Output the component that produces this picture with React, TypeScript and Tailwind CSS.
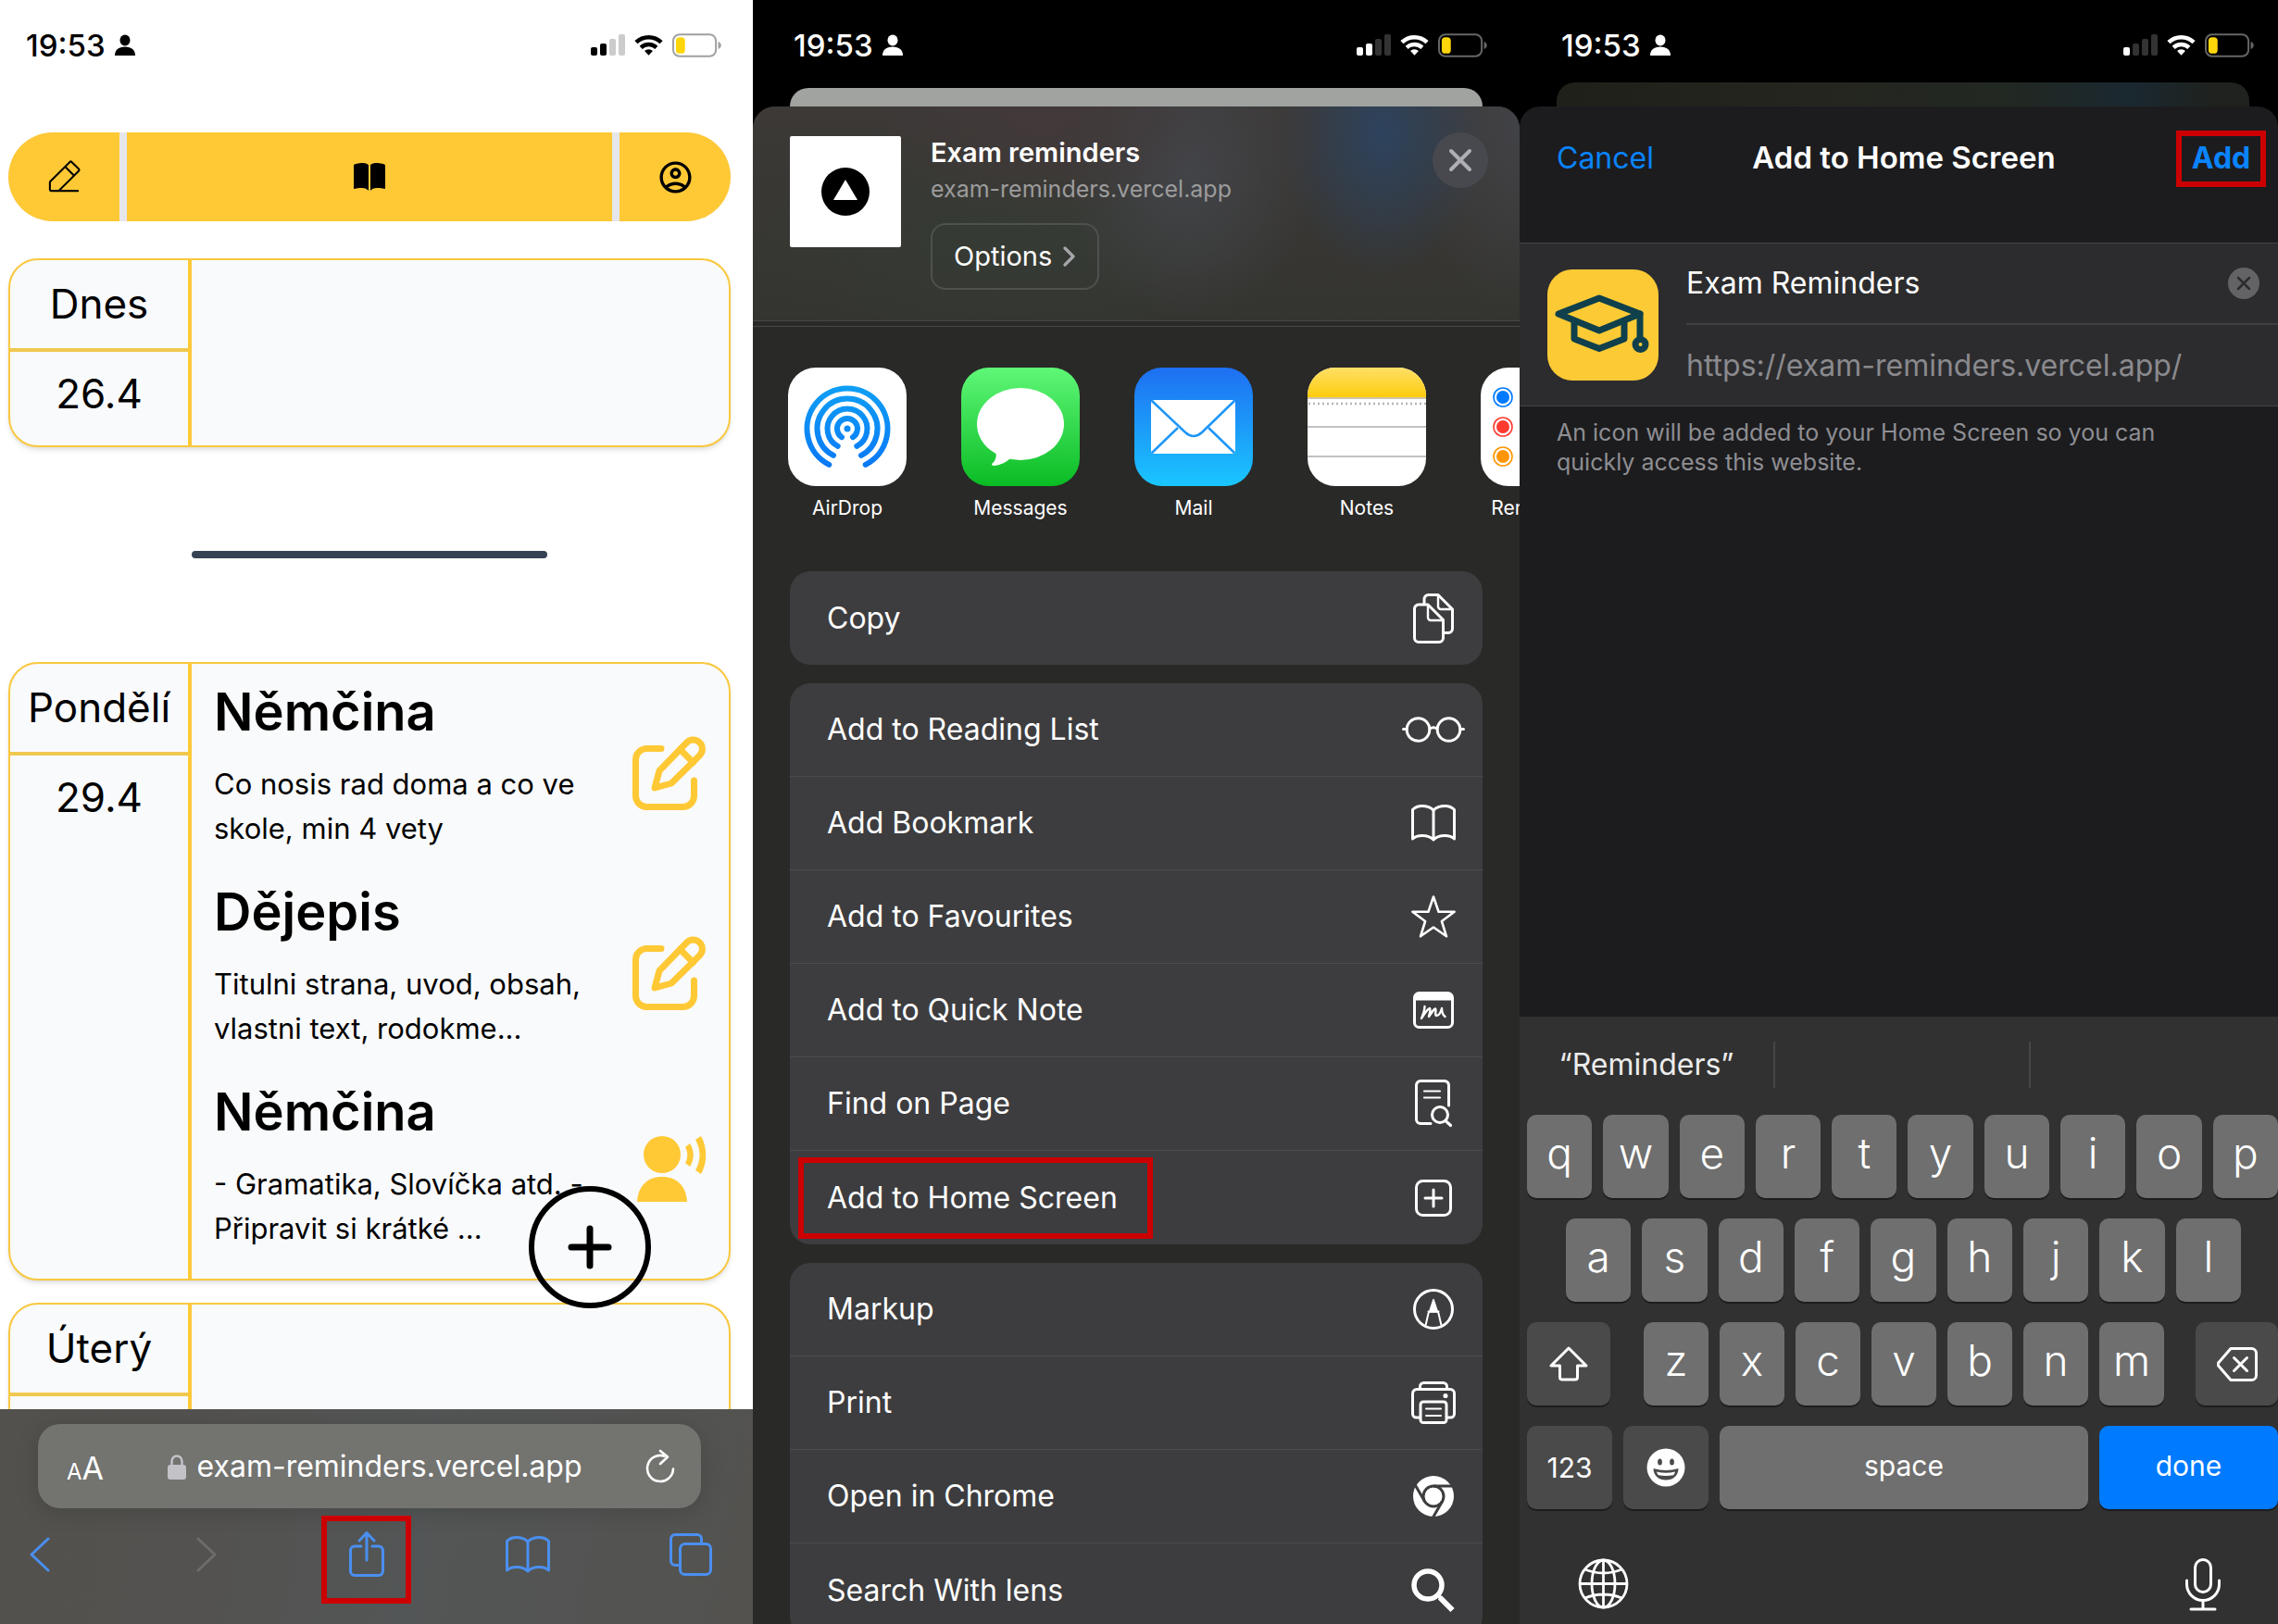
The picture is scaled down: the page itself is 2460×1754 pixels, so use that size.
import type { ReactNode } from "react";
import { MdOutlineAccountCircle } from "react-icons/md";
import { PiPencilSimpleLineLight } from "react-icons/pi";

/* ---------- Status bar ---------- */

function StatusBar({ bars, dark, className }: { bars: number; dark?: boolean; className: string }) {
  const ink = dark ? "#ffffff" : "#000000";
  const faint = dark ? "#333333" : "#cccccc";
  const frame = dark ? "#666666" : "#a0a0a0";
  const shapes = [
    { x: 0, y: 14, h: 9 },
    { x: 10, y: 10, h: 13 },
    { x: 20, y: 5, h: 18 },
    { x: 30, y: 0, h: 23 },
  ];
  return (
    <header className={"flex shrink-0 items-center justify-between " + className}>
      <div className="flex items-center gap-2.5">
        <span className="text-[33px] leading-10 font-medium">19:53</span>
        <svg width="22" height="24" viewBox="0 0 22 24" fill={ink} aria-label="Focus">
          <ellipse cx="11" cy="6.5" rx="5.5" ry="6" />
          <path d="M0 23c0-6 4-9.5 11-9.5S22 17 22 23z" />
        </svg>
      </div>
      <div className="flex items-center gap-2.5">
        <svg width="37" height="24" viewBox="0 0 37 24" aria-label="Signal">
          {shapes.map((s, i) => (
            <rect key={s.x} x={s.x} y={s.y} width="7" height={s.h} rx="2" fill={i < bars ? ink : faint} />
          ))}
        </svg>
        <svg width="31" height="24" viewBox="0 0 32 24" fill="none" stroke={ink} strokeWidth="4.6" aria-label="Wi-Fi">
          <path d="M2 8.6a20 20 0 0 1 28 0" />
          <path d="M7.4 14.4a12.4 12.4 0 0 1 17.2 0" />
          <path d="M16 23l-4.6-4.7a6.6 6.6 0 0 1 9.2 0z" fill={ink} stroke="none" />
        </svg>
        <svg width="53" height="26" viewBox="0 0 54 26" aria-label="Battery">
          <rect x="1" y="1" width="47" height="24" rx="7" fill="none" stroke={frame} strokeWidth="2" />
          <rect x="4" y="4" width="10" height="18" rx="4" fill="#ffd60a" />
          <path d="M50.5 9c2.4 1 3.2 2.2 3.2 4s-.8 3-3.2 4z" fill={frame} />
        </svg>
      </div>
    </header>
  );
}

/* ---------- Web page in Safari ---------- */

function EditIcon() {
  return (
    <svg width="80" height="80" viewBox="0 0 80 80" fill="none" stroke="#ffc936" strokeWidth="7" strokeLinecap="round" strokeLinejoin="round">
      <path d="M31 13.5H15.500A12 12 0 0 0 3.500 25.500V64.500A12 12 0 0 0 15.500 76.500H54.500A12 12 0 0 0 66.500 64.500V48" />
      <path d="M24 56l5-18.500L58.500 7a9.800 9.800 0 0 1 14 14L42 51z" />
      <path d="M51.500 14.500l14 14" />
    </svg>
  );
}

function SpeakingIcon() {
  return (
    <svg width="75" height="72" viewBox="0 0 75 72" fill="#ffc936">
      <circle cx="27" cy="20" r="20" />
      <path d="M0 71c1-17 11-27 27-27s26 10 27 27z" />
      <path d="M52 12l5-4c5 8 5 17 0 25l-5-4c3-5 3-12 0-17z" />
      <path d="M63 4l6-4c7 12 7 29 0 41l-6-4c6-10 6-23 0-33z" />
    </svg>
  );
}

function DayCard({ day, date, children, className }: { day: string; date?: string; children?: ReactNode; className?: string }) {
  return (
    <section
      className={
        "ml-[9px] mr-6 flex shrink-0 overflow-hidden rounded-[32px] border-2 border-[#f9c840] bg-[#f9fafb] shadow-md " + className
      }
    >
      <div className="w-[196px] shrink-0 border-r-4 border-[#ffc936] text-center text-[44px]">
        <h2 className="flex h-[99px] items-center justify-center border-b-4 border-[#f0c850] pb-0.5">{day}</h2>
        <p className="flex h-[90px] items-center justify-center">{date}</p>
      </div>
      <div className="flex-1">{children}</div>
    </section>
  );
}

const exams = [
  { subject: "Němčina", lines: ["Co nosis rad doma a co ve", "skole, min 4 vety"], icon: <EditIcon /> },
  { subject: "Dějepis", lines: ["Titulni strana, uvod, obsah,", "vlastni text, rodokme..."], icon: <EditIcon /> },
  { subject: "Němčina", lines: ["- Gramatika, Slovíčka atd. -", "Připravit si krátké ..."], icon: <SpeakingIcon /> },
];

function BookOutline() {
  return (
    <svg width="48" height="40" viewBox="0 0 48 40" fill="none" stroke="currentColor" strokeWidth="3" strokeLinejoin="round">
      <path d="M24 6C20 2 15 1.500 11.500 1.500S4 3 1.500 5.500V37C4 34.500 8 33.500 12 33.500s8.500 1 12 4.500c3.500-3.500 8-4.500 12-4.500s8 1 10.500 3.500V5.500C44 3 40 1.500 36.500 1.500S28 2 24 6z" />
      <path d="M24 6v32" />
    </svg>
  );
}

function SafariPanel() {
  return (
    <section className="relative flex min-w-0 flex-col overflow-hidden bg-white text-black">
      <StatusBar bars={2} className="h-[98px] pl-7 pr-[34px]" />
      <main className="flex min-h-0 flex-1 flex-col overflow-hidden">
        <nav className="ml-[9px] mr-6 mt-[45px] flex h-24 shrink-0 gap-2 overflow-hidden rounded-full bg-gray-200">
          <button aria-label="Edit" className="flex w-[120px] items-center justify-center bg-[#ffc936]">
            <PiPencilSimpleLineLight size={44} />
          </button>
          <button aria-label="Exams" className="flex flex-1 items-center justify-center bg-[#ffc936]">
            <svg width="34" height="30" viewBox="0 0 34 30">
              <path d="M0 2.500C0 1 6 0 9.500 0S16 1.500 16 2.500V30c-1.500-2-4-3-7-3s-7 .5-9 1zM34 2.500C34 1 28 0 24.500 0S18 1.500 18 2.500V30c1.500-2 4-3 7-3s7 .5 9 1z" />
            </svg>
          </button>
          <button aria-label="Account" className="flex w-[120px] items-center justify-center bg-[#ffc936]">
            <MdOutlineAccountCircle size={41} />
          </button>
        </nav>
        <DayCard day="Dnes" date="26.4" className="mt-10 h-[204px]" />
        <hr className="ml-[207px] mt-28 h-2 w-96 shrink-0 rounded-full border-0 bg-gray-700" />
        <DayCard day="Pondělí" date="29.4" className="mt-28 h-[668px]">
          <div className="flex flex-col gap-[30px] pb-8 pl-6 pr-6 pt-4">
            {exams.map((e, i) => (
              <article key={i} className="flex justify-between">
                <div>
                  <h3 className="text-[56px] leading-[72px] font-semibold">{e.subject}</h3>
                  <p className="mt-[18px] text-[31px] leading-[48px] whitespace-nowrap">
                    {e.lines[0]}
                    <br />
                    {e.lines[1]}
                  </p>
                </div>
                <div className="pt-[62px]">{e.icon}</div>
              </article>
            ))}
          </div>
        </DayCard>
        <DayCard day="Úterý" className="mt-6 h-[204px]" />
      </main>
      <button aria-label="Add exam" className="absolute bottom-[341px] right-[110px]">
        <svg width="132" height="132" viewBox="0 0 132 132" fill="none" stroke="#000">
          <circle cx="66" cy="66" r="63" strokeWidth="6" />
          <path d="M66 46v40M46 66h40" strokeWidth="7" strokeLinecap="round" />
        </svg>
      </button>
      <footer className="h-[232px] shrink-0 bg-[linear-gradient(100deg,#53514d_0%,#535250_30%,#535656_55%,#53524f_100%)] pt-4 text-[#4a8ff0]">
        <div className="ml-[41px] mr-14 flex h-[91px] items-center justify-between rounded-[24px] bg-[#737370] pl-[31px] pr-7 text-white shadow-[0_4px_24px_rgba(0,0,0,0.15)]">
          <button aria-label="Page settings" className="flex items-baseline pt-1 leading-none">
            <span className="text-[24px]">A</span>
            <span className="text-[34px]">A</span>
          </button>
          <label className="flex items-center gap-3">
            <svg width="20" height="28" viewBox="0 0 20 28" fill="#c3c2c8" aria-label="Secure">
              <rect y="12" width="20" height="16" rx="3" />
              <path d="M4.500 13V8a5.500 5.500 0 0 1 11 0v5" fill="none" stroke="#c3c2c8" strokeWidth="2.500" />
            </svg>
            <input
              aria-label="Address"
              defaultValue="exam-reminders.vercel.app"
              className="field-sizing-content bg-transparent text-[32px] leading-10"
            />
          </label>
          <button aria-label="Reload">
            <svg width="32" height="38" viewBox="0 0 32 38" fill="none" stroke="currentColor" strokeWidth="2.600" strokeLinecap="round" strokeLinejoin="round">
              <path d="M20.500 7.700A14 14 0 1 0 30 21.500" />
              <path d="M16 2l8 6.500-8 7.500" />
            </svg>
          </button>
        </div>
        <div className="flex items-center justify-between pl-8 pr-11 pt-2">
          <button aria-label="Back" className="pb-3">
            <svg width="22" height="38" viewBox="0 0 22 38" fill="none" stroke="currentColor" strokeWidth="3" strokeLinecap="round" strokeLinejoin="round">
              <path d="M20 2L2 19l18 17" />
            </svg>
          </button>
          <button aria-label="Forward" className="ml-14 pb-3 text-[#6e6c69]">
            <svg width="22" height="38" viewBox="0 0 22 38" fill="none" stroke="currentColor" strokeWidth="3" strokeLinecap="round" strokeLinejoin="round">
              <path d="M2 2l18 17L2 36" />
            </svg>
          </button>
          <button aria-label="Share" className="ml-3 flex h-[95px] w-[97px] justify-center border-[6px] border-[#cc0000] pt-[11px]">
            <svg width="38" height="49" viewBox="0 0 38 49" fill="none" stroke="currentColor" strokeWidth="3" strokeLinecap="round" strokeLinejoin="round">
              <path d="M13 16H6a4.500 4.500 0 0 0-4.500 4.500V43A4.500 4.500 0 0 0 6 47.500h26a4.500 4.500 0 0 0 4.500-4.500V20.500A4.500 4.500 0 0 0 32 16h-7" />
              <path d="M19 31V2M11 10l8-8.500 8 8.500" />
            </svg>
          </button>
          <button aria-label="Bookmarks" className="pb-3">
            <BookOutline />
          </button>
          <button aria-label="Tabs" className="ml-7 pb-3">
            <svg width="46" height="46" viewBox="0 0 46 46" fill="none" stroke="currentColor" strokeWidth="3">
              <path d="M11 34.500H6A4.500 4.500 0 0 1 1.500 30V6A4.500 4.500 0 0 1 6 1.500h24A4.500 4.500 0 0 1 34.500 6v5" />
              <rect x="11.500" y="11.500" width="33" height="33" rx="5" />
            </svg>
          </button>
        </div>
      </footer>
    </section>
  );
}

/* ---------- Share sheet ---------- */

function AirDropIcon() {
  return (
    <svg width="128" height="128" viewBox="0 0 128 128" fill="none">
      <defs>
        <linearGradient id="drop" x1="0" y1="20" x2="0" y2="108" gradientUnits="userSpaceOnUse">
          <stop stopColor="#0f9ff5" />
          <stop offset="1" stopColor="#0a78f5" />
        </linearGradient>
      </defs>
      <rect width="128" height="128" fill="#fff" />
      <g stroke="url(#drop)" strokeWidth="6" strokeLinecap="round">
        <path d="M44.300 104.800a43.500 43.500 0 1 1 39.400 0" />
        <path d="M49 94.900a32.500 32.500 0 1 1 30 0" />
        <path d="M53.700 84.900a21.500 21.500 0 1 1 20.600 0" />
        <path d="M58 75.200a11 11 0 1 1 12 0" />
      </g>
      <circle cx="64" cy="66" r="3.500" fill="#0c8cf5" />
    </svg>
  );
}

function MessagesIcon() {
  return (
    <svg width="128" height="128" viewBox="0 0 128 128">
      <defs>
        <linearGradient id="msg" x1="0" y1="0" x2="0" y2="1">
          <stop stopColor="#5ff777" />
          <stop offset="1" stopColor="#0abc24" />
        </linearGradient>
      </defs>
      <rect width="128" height="128" fill="url(#msg)" />
      <ellipse cx="64" cy="61" rx="47" ry="39" fill="#fff" />
      <path d="M36 86c3 8 2 14-3 18 0 2 2 2 3 2 7-1 13-4 17-8z" fill="#fff" />
    </svg>
  );
}

function MailIcon() {
  return (
    <svg width="128" height="128" viewBox="0 0 128 128">
      <defs>
        <linearGradient id="mail" x1="0" y1="0" x2="0" y2="1">
          <stop stopColor="#1e6ff2" />
          <stop offset="1" stopColor="#1ac6ff" />
        </linearGradient>
      </defs>
      <rect width="128" height="128" fill="url(#mail)" />
      <rect x="18" y="35" width="91" height="58" rx="4" fill="#fff" />
      <g fill="none" stroke="#1e96f8" strokeWidth="2.500">
        <path d="M19 36l36 34q9 8 18 0l35-34" />
        <path d="M19 92l28-27M108 92L80 65" />
      </g>
    </svg>
  );
}

function NotesIcon() {
  return (
    <svg width="128" height="128" viewBox="0 0 128 128">
      <defs>
        <linearGradient id="note" x1="0" y1="0" x2="0" y2="1">
          <stop stopColor="#ffdf66" />
          <stop offset="1" stopColor="#fdcd0e" />
        </linearGradient>
      </defs>
      <rect width="128" height="128" fill="#fff" />
      <rect width="128" height="32" fill="url(#note)" />
      <path d="M0 33h128" stroke="#cfc6a8" strokeWidth="2" />
      <path d="M1 39h128" stroke="#b5b5b8" strokeWidth="2.500" strokeDasharray="2 3" />
      <path d="M0 64h128M0 96h128" stroke="#c2c2c4" strokeWidth="2" />
    </svg>
  );
}

function RemindersIcon() {
  const dots = [
    { y: 32, c: "#007aff" },
    { y: 64, c: "#ff3b30" },
    { y: 96, c: "#ff9500" },
  ];
  return (
    <svg width="128" height="128" viewBox="0 0 128 128">
      <rect width="128" height="128" fill="#fff" />
      {dots.map((d) => (
        <g key={d.c}>
          <circle cx="24" cy={d.y} r="10" fill="#fff" stroke={d.c} strokeWidth="1.600" />
          <circle cx="24" cy={d.y} r="7" fill={d.c} />
          <path d={"M48 " + (d.y + 16) + "h80"} stroke="#d0d0d4" strokeWidth="1.500" />
        </g>
      ))}
    </svg>
  );
}

const apps = [
  { name: "AirDrop", icon: <AirDropIcon /> },
  { name: "Messages", icon: <MessagesIcon /> },
  { name: "Mail", icon: <MailIcon /> },
  { name: "Notes", icon: <NotesIcon /> },
  { name: "Reminders", icon: <RemindersIcon /> },
];

function Glyph({ w, h, children }: { w: number; h: number; children: ReactNode }) {
  return (
    <svg width={w} height={h} viewBox={"0 0 " + w + " " + h} fill="none" stroke="#fff" strokeWidth="3" strokeLinecap="round" strokeLinejoin="round">
      {children}
    </svg>
  );
}

type Action = { label: string; icon: ReactNode; marked?: boolean };

const groups: Action[][] = [
  [
    {
      label: "Copy",
      icon: (
        <Glyph w={44} h={54}>
          <path d="M12 11V6a4.500 4.500 0 0 1 4.500-4.500H27L42.500 17v21a4.500 4.500 0 0 1-4.500 4.500h-5" />
          <path d="M27 2v12a3 3 0 0 0 3 3h12" strokeWidth="2.400" />
          <path d="M16 12H6a4.500 4.500 0 0 0-4.500 4.500V48A4.500 4.500 0 0 0 6 52.500h22a4.500 4.500 0 0 0 4.500-4.500V28.500z" />
          <path d="M16 12.500V26a3 3 0 0 0 3 3h13" strokeWidth="2.400" />
        </Glyph>
      ),
    },
  ],
  [
    {
      label: "Add to Reading List",
      icon: (
        <Glyph w={68} h={28}>
          <circle cx="17.500" cy="14" r="12.300" />
          <circle cx="50.500" cy="14" r="12.300" />
          <path d="M30 13q4-2.500 8 0M1.500 13.500H5M63 13.500h3.500" />
        </Glyph>
      ),
    },
    { label: "Add Bookmark", icon: <BookOutline /> },
    {
      label: "Add to Favourites",
      icon: (
        <Glyph w={48} h={46}>
          <path d="M24 1.500l5.600 16.300h17L32.900 28l5.100 16.300L24 34.500 10 44.300 15.100 28 1.400 17.800h17z" strokeWidth="2.600" />
        </Glyph>
      ),
    },
    {
      label: "Add to Quick Note",
      icon: (
        <Glyph w={44} h={40}>
          <rect x="1.500" y="1.500" width="41" height="37" rx="5" />
          <path d="M2 6a4 4 0 0 1 4-4h32a4 4 0 0 1 4 4v3H2z" fill="#fff" stroke="none" />
          <path d="M2 8h40" />
          <path d="M12.500 16c0 5-2 9-3.500 13 3-5 6-10 9-11 1.500 1-.5 6-1 9 3-4 5-8 7-8.500 1.500.5-1 7.500 1 7.500 3 0 5-4 6-8 0 4 1 7 3.500 9" strokeWidth="2.400" />
        </Glyph>
      ),
    },
    {
      label: "Find on Page",
      icon: (
        <Glyph w={40} h={52}>
          <path d="M17 47.500H6A4.500 4.500 0 0 1 1.500 43V6A4.500 4.500 0 0 1 6 1.500h26A4.500 4.500 0 0 1 36.500 6v22" />
          <path d="M10 12.500h17M10 19.500h17" strokeWidth="2.200" />
          <circle cx="27" cy="38" r="8.500" />
          <path d="M33 44.500l5.500 5" strokeWidth="3.200" />
        </Glyph>
      ),
    },
    {
      label: "Add to Home Screen",
      marked: true,
      icon: (
        <Glyph w={40} h={40}>
          <rect x="1.500" y="1.500" width="37" height="37" rx="7" />
          <path d="M20 11v18M11 20h18" />
        </Glyph>
      ),
    },
  ],
  [
    {
      label: "Markup",
      icon: (
        <Glyph w={44} h={44}>
          <circle cx="22" cy="22" r="20.500" />
          <path d="M22 11.500l4.500 13.500h-9z" fill="#fff" strokeWidth="1.500" />
          <path d="M17 24.500l-3.500 15M27 24.500l3.500 15M16.500 24.500h11" strokeWidth="2" />
        </Glyph>
      ),
    },
    {
      label: "Print",
      icon: (
        <Glyph w={48} h={46}>
          <path d="M9.500 8.500V5.500a4 4 0 0 1 4-4h21a4 4 0 0 1 4 4v3" />
          <path d="M9 39H5.500a4 4 0 0 1-4-4V13a4.500 4.500 0 0 1 4.500-4.500h36a4.500 4.500 0 0 1 4.500 4.500v22a4 4 0 0 1-4 4H39" />
          <rect x="10" y="22" width="28" height="22.500" rx="3" />
          <path d="M16 29.500h16M16 37h16" strokeWidth="2" />
          <circle cx="37" cy="15.500" r="1.800" fill="#fff" strokeWidth="1.500" />
        </Glyph>
      ),
    },
    {
      label: "Open in Chrome",
      icon: (
        <svg width="44" height="44" viewBox="0 0 44 44">
          <circle cx="22" cy="22" r="22" fill="#fff" />
          <g fill="none" stroke="#3d3d3f" strokeWidth="3">
            <circle cx="22" cy="22" r="11" />
            <path d="M22 11h22" />
            <path d="M22 11h22" transform="rotate(120 22 22)" />
            <path d="M22 11h22" transform="rotate(240 22 22)" />
          </g>
        </svg>
      ),
    },
    {
      label: "Search With lens",
      icon: (
        <svg width="48" height="48" viewBox="0 0 48 48" fill="none" stroke="#fff" strokeWidth="5.500">
          <circle cx="18" cy="18" r="15" />
          <path d="M29 29l4 4" strokeWidth="4" />
          <path d="M31 31.500l13.500 13.500" strokeWidth="6" />
        </svg>
      ),
    },
  ],
];

function SharePanel() {
  return (
    <section className="flex min-w-0 flex-col overflow-hidden bg-black text-white">
      <StatusBar bars={2} dark className="h-[95px] pl-11 pr-[35px] pt-0.5" />
      <div className="mx-10 h-5 shrink-0 rounded-t-[20px] bg-[#a0a39f]" />
      <div className="flex min-h-0 flex-1 flex-col overflow-hidden rounded-t-[24px] bg-[#292927]">
        <header className="flex h-[231px] shrink-0 items-start bg-[radial-gradient(ellipse_110px_150px_at_680px_30px,#2d435e_0%,transparent_100%),radial-gradient(ellipse_180px_120px_at_310px_10px,#43393a_0%,transparent_100%),radial-gradient(ellipse_140px_160px_at_470px_70px,#434449_0%,transparent_100%),radial-gradient(ellipse_300px_140px_at_280px_140px,#353b34_0%,transparent_100%),radial-gradient(ellipse_120px_200px_at_828px_20px,#414246_0%,transparent_100%),linear-gradient(#3c3937,#343430)] pl-10 pr-[34px] pt-8">
          <svg width="120" height="120" viewBox="0 0 120 120" className="rounded-xs" aria-label="Page thumbnail">
            <rect width="120" height="120" fill="#fff" />
            <circle cx="60" cy="60" r="26" />
            <path d="M60 47l13 22H47z" fill="#fff" />
          </svg>
          <div className="ml-8 flex flex-1 flex-col items-start">
            <h2 className="text-[29px] leading-9 font-semibold">Exam reminders</h2>
            <p className="mt-1 text-[25px] leading-[34px] text-[#9c9c9c]">exam-reminders.vercel.app</p>
            <button className="mt-5 flex h-[72px] items-center gap-3 rounded-2xl border-2 border-[#4e514e] px-[23px] text-[29px]">
              Options
              <svg width="14" height="22" viewBox="0 0 14 22" fill="none" stroke="#a5a5aa" strokeWidth="3.200" strokeLinecap="round" strokeLinejoin="round">
                <path d="M2 2l9 9-9 9" />
              </svg>
            </button>
          </div>
          <button aria-label="Close" className="-mt-1 flex h-[60px] w-[60px] items-center justify-center rounded-full bg-[#48494e]">
            <svg width="26" height="26" viewBox="0 0 26 26" stroke="#aeaeb4" strokeWidth="4" strokeLinecap="round">
              <path d="M3 3l20 20M23 3L3 23" />
            </svg>
          </button>
        </header>
        <div className="h-[7px] shrink-0 border-y border-[#484846]" />
        <ul className="flex shrink-0 gap-[59px] overflow-hidden pl-[38px] pt-11">
          {apps.map((a) => (
            <li key={a.name} className="shrink-0">
              <button className="flex w-32 flex-col items-center">
                <span className="overflow-hidden rounded-[30px]">{a.icon}</span>
                <span className="mt-2.5 text-[21px] leading-7">{a.name}</span>
              </button>
            </li>
          ))}
        </ul>
        <div className="mx-10 mt-[54px] flex flex-col gap-5">
          {groups.map((g, i) => (
            <ul key={i} className="overflow-hidden rounded-[22px] bg-[#3d3d3f]">
              {g.map((a) => (
                <li key={a.label} className="h-[101px] border-b border-[#4b4b4d] last:border-b-0">
                  <button className="relative flex h-full w-full items-center justify-between pl-10 text-[32px]">
                    {a.label}
                    <span className="flex w-[106px] justify-center">{a.icon}</span>
                    {a.marked && (
                      <span className="absolute left-[9px] top-[7px] h-[88px] w-[383px] border-[6px] border-[#cc0000]" />
                    )}
                  </button>
                </li>
              ))}
            </ul>
          ))}
        </div>
      </div>
    </section>
  );
}

/* ---------- Add to Home Screen ---------- */

function LetterKey({ k }: { k: string }) {
  return (
    <button className="flex h-[90px] min-w-0 flex-1 items-center justify-center rounded-[10px] bg-[#6f6f6f] pb-2 text-[46px] font-[350] shadow-[0_2px_0_#1d1d1d]">
      {k}
    </button>
  );
}

function Keyboard() {
  return (
    <div className="shrink-0 bg-[#313131]">
      <div className="mb-0.5 grid h-[104px] grid-cols-[276px_276px_1fr] items-center">
        <button className="h-[50px] border-r-2 border-[#464646] text-[32px] text-[#ececec]">“Reminders”</button>
        <span className="h-[50px] border-r-2 border-[#464646]" />
      </div>
      <div className="flex flex-col gap-[22px] pl-2">
        <div className="flex gap-3">
          {"qwertyuiop".split("").map((k) => (
            <LetterKey key={k} k={k} />
          ))}
        </div>
        <div className="flex gap-3 pl-[42px] pr-10">
          {"asdfghjkl".split("").map((k) => (
            <LetterKey key={k} k={k} />
          ))}
        </div>
        <div className="flex">
          <button aria-label="Shift" className="flex w-[90px] items-center justify-center rounded-[10px] bg-[#4a4a4a] shadow-[0_2px_0_#1d1d1d]">
            <svg width="42" height="38" viewBox="0 0 42 38" fill="none" stroke="#fff" strokeWidth="3" strokeLinejoin="round">
              <path d="M21 2L2 21h9.500v12.500a2.500 2.500 0 0 0 2.500 2.500h14a2.500 2.500 0 0 0 2.500-2.500V21H40z" />
            </svg>
          </button>
          <div className="ml-9 mr-[34px] flex flex-1 gap-3">
            {"zxcvbnm".split("").map((k) => (
              <LetterKey key={k} k={k} />
            ))}
          </div>
          <button aria-label="Delete" className="flex w-[89px] items-center justify-center rounded-[10px] bg-[#4a4a4a] shadow-[0_2px_0_#1d1d1d]">
            <svg width="44" height="37" viewBox="0 0 44 37" fill="none" stroke="#fff" strokeWidth="3" strokeLinecap="round" strokeLinejoin="round">
              <path d="M15 1.500h22.500a5 5 0 0 1 5 5v24a5 5 0 0 1-5 5H15L2 20.500a3 3 0 0 1 0-4z" />
              <path d="M18.500 11.500l14 14M32.500 11.500l-14 14" />
            </svg>
          </button>
        </div>
        <div className="flex h-[90px] gap-3 text-[30px]">
          <button className="w-[92px] rounded-[10px] bg-[#4a4a4a] shadow-[0_2px_0_#1d1d1d]">123</button>
          <button aria-label="Emoji" className="flex w-[92px] items-center justify-center rounded-[10px] bg-[#4a4a4a] shadow-[0_2px_0_#1d1d1d]">
            <svg width="42" height="42" viewBox="0 0 42 42" fill="#4a4a4a">
              <circle cx="21" cy="21" r="20.500" fill="#fff" />
              <ellipse cx="14.500" cy="15" rx="2.400" ry="3.600" />
              <ellipse cx="27.500" cy="15" rx="2.400" ry="3.600" />
              <path d="M7.500 22q13.500 4 27 0c0 8-6 12.500-13.500 12.500S7.500 30 7.500 22z" />
              <path d="M11 25.500q10 2.500 20 0-.6 2.500-2 3.800-8 1.500-16 0-1.400-1.300-2-3.800z" fill="#fff" />
            </svg>
          </button>
          <button className="flex-1 rounded-[10px] bg-[#6f6f6f] pb-1 shadow-[0_2px_0_#1d1d1d]">space</button>
          <button className="w-[193px] rounded-[10px] bg-[#007aff] pb-1 shadow-[0_2px_0_#1d1d1d]">done</button>
        </div>
      </div>
      <div className="flex items-start justify-between pb-[14px] pl-[63px] pr-[62px] pt-[53px]">
        <button aria-label="Next keyboard">
          <svg width="55" height="55" viewBox="0 0 55 55" fill="none" stroke="#fff" strokeWidth="2.800">
            <circle cx="27.500" cy="27.500" r="25.500" />
            <ellipse cx="27.500" cy="27.500" rx="12.500" ry="25.500" />
            <path d="M27.500 2v51M2 27.500h51M7.500 12q20 8 40 0M7.500 43q20-8 40 0" />
          </svg>
        </button>
        <button aria-label="Dictate">
          <svg width="38" height="57" viewBox="0 0 38 57" fill="none" stroke="#fff" strokeWidth="3" strokeLinecap="round">
            <rect x="10.500" y="1.500" width="17" height="35" rx="8.500" />
            <path d="M1.500 24v4a17.500 17.500 0 0 0 35 0v-4M19 45.500v9M6 55h26" />
          </svg>
        </button>
      </div>
    </div>
  );
}

function AddToHomePanel() {
  return (
    <section className="flex min-w-0 flex-col overflow-hidden bg-black text-white">
      <StatusBar bars={1} dark className="h-[89px] pl-[45px] pr-[26px] pt-2" />
      <div className="ml-10 mr-[31px] h-[26px] shrink-0 rounded-t-[20px] bg-[linear-gradient(90deg,#20201a_0%,#25251f_35%,#222822_65%,#1a2830_83%,#1f221e_95%)]" />
      <div className="flex min-h-0 flex-1 flex-col overflow-hidden rounded-t-[22px] bg-[#1c1c1e]">
        <header className="grid h-28 shrink-0 grid-cols-[1fr_auto_1fr] items-center pl-10 pr-[13px] text-[32px]">
          <button className="justify-self-start text-[#0a84ff]">Cancel</button>
          <h2 className="pr-4 text-[33px] font-semibold">Add to Home Screen</h2>
          <button className="h-[61px] w-[97px] justify-self-end border-[6px] border-[#cc0000] font-bold text-[#0a84ff]">Add</button>
        </header>
        <form className="mt-[35px] flex shrink-0 gap-[30px] border-y border-[#444446] bg-[#2c2c2e] pl-[30px] text-[32px]">
          <svg width="120" height="120" viewBox="0 0 120 120" className="mt-7 rounded-[27px]" aria-label="App icon">
            <rect width="120" height="120" fill="#fcca35" />
            <g fill="none" stroke="#0f404b" strokeWidth="7" strokeLinecap="round" strokeLinejoin="round">
              <path d="M12 48L56 31l44 17-44 18z" />
              <path d="M29 56v19l27 10.500L83 75V56" />
              <path d="M100 48v24" />
              <circle cx="100.500" cy="81" r="5.500" />
            </g>
          </svg>
          <div className="min-w-0 flex-1">
            <div className="flex h-[88px] items-center border-b-2 border-[#404042] pr-5">
              <input aria-label="Name" defaultValue="Exam Reminders" className="min-w-0 flex-1 bg-transparent" />
              <button type="button" aria-label="Clear name" className="flex h-[34px] w-[34px] items-center justify-center rounded-full bg-[#636366]">
                <svg width="16" height="16" viewBox="0 0 16 16" stroke="#2c2c2e" strokeWidth="2.500" strokeLinecap="round">
                  <path d="M2 2l12 12M14 2L2 14" />
                </svg>
              </button>
            </div>
            <p className="flex h-[87px] items-center text-[#8a8a8e]">https://exam-reminders.vercel.app/</p>
          </div>
        </form>
        <p className="pl-10 pt-3 text-[25px] leading-8 text-[#8e8e93]">
          An icon will be added to your Home Screen so you can
          <br />
          quickly access this website.
        </p>
        <div className="flex-1" />
        <Keyboard />
      </div>
    </section>
  );
}

export default function App() {
  return (
    <div className="grid h-screen grid-cols-[813fr_828fr_819fr] overflow-hidden bg-black font-[Inter,'Liberation_Sans',sans-serif]">
      <SafariPanel />
      <SharePanel />
      <AddToHomePanel />
    </div>
  );
}
